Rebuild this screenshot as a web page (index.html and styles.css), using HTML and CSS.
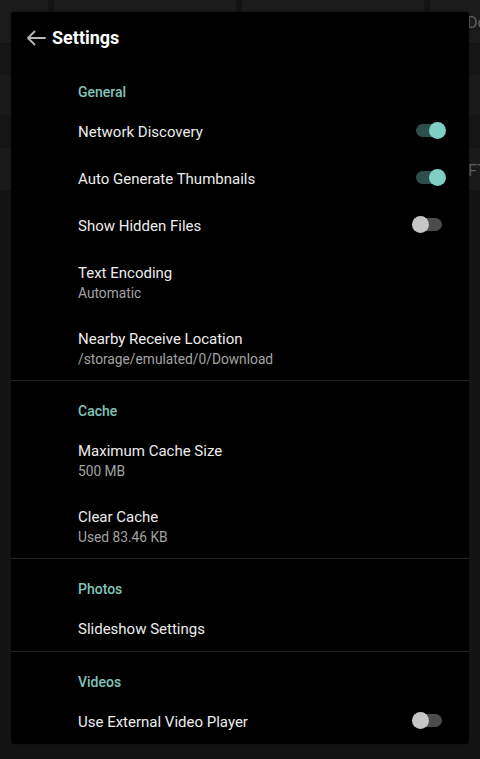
FILE: index.html
```html
<!DOCTYPE html>
<html>
<head>
<meta charset="utf-8">
<link rel="stylesheet" href="styles.css">
</head>
<body>
<div class="backdrop">
  <div class="topbar">
    <div class="tcard c1"></div>
    <div class="tcard c2"></div>
    <div class="tcard c3"></div>
    <div class="tcard c4"><span class="bgtext">Do</span></div>
  </div>
  <div class="bgrow r1"></div>
  <div class="bgrow r2"></div>
  <div class="bgrow r3"></div>
  <div class="bgrow r4"><span class="bgtext">FT</span></div>
</div>

<div class="panel">
  <div class="header">
    <svg class="back" width="20" height="16" viewBox="0 0 20 16">
      <path d="M19 8H2M8.5 1.5L2 8l6.5 6.5" fill="none" stroke="#b8b8b8" stroke-width="1.8" stroke-linecap="round" stroke-linejoin="round"/>
    </svg>
    <span class="title">Settings</span>
  </div>

  <div class="cat">General</div>
  <div class="row single">
    <div class="text"><div class="t">Network Discovery</div></div>
    <div class="switch on"><div class="thumb"></div></div>
  </div>
  <div class="row single">
    <div class="text"><div class="t">Auto Generate Thumbnails</div></div>
    <div class="switch on"><div class="thumb"></div></div>
  </div>
  <div class="row single">
    <div class="text"><div class="t">Show Hidden Files</div></div>
    <div class="switch"><div class="thumb"></div></div>
  </div>
  <div class="row double">
    <div class="text"><div class="t">Text Encoding</div><div class="s">Automatic</div></div>
  </div>
  <div class="row double">
    <div class="text"><div class="t">Nearby Receive Location</div><div class="s">/storage/emulated/0/Download</div></div>
  </div>
  <div class="divider"></div>

  <div class="cat">Cache</div>
  <div class="row double">
    <div class="text"><div class="t">Maximum Cache Size</div><div class="s">500 MB</div></div>
  </div>
  <div class="row double">
    <div class="text"><div class="t">Clear Cache</div><div class="s">Used 83.46 KB</div></div>
  </div>
  <div class="divider"></div>

  <div class="cat">Photos</div>
  <div class="row single">
    <div class="text"><div class="t">Slideshow Settings</div></div>
  </div>
  <div class="divider"></div>

  <div class="cat">Videos</div>
  <div class="row single">
    <div class="text"><div class="t">Use External Video Player</div></div>
    <div class="switch"><div class="thumb"></div></div>
  </div>
</div>
</body>
</html>
```

FILE: styles.css
```css
html, body {
  margin: 0;
  padding: 0;
}
body {
  width: 480px;
  height: 759px;
  overflow: hidden;
  background: #131313;
  font-family: Roboto, "Noto Sans", sans-serif;
  position: relative;
}

.backdrop {
  display: flex;
  flex-direction: column;
}
.topbar {
  display: flex;
  gap: 6px;
  height: 43px;
  margin-bottom: 2px;
}
.tcard {
  background: #1b1b1b;
  height: 100%;
  overflow: hidden;
}
.c1 { width: 48px; }
.c2 { width: 182px; }
.c3 { width: 182px; }
.c4 { flex: 1; padding-left: 37px; }
.bgrow {
  overflow: hidden;
}
.r1 { height: 30px; background: #161616; }
.r2 { height: 40px; background: #1a1a1a; }
.r3 { height: 33px; background: #151515; }
.r4 { height: 42px; background: #1a1a1a; padding-left: 468px; box-sizing: border-box; }
.bgtext {
  color: #5e5e5e;
  font-size: 16px;
  line-height: 46px;
  white-space: nowrap;
}
.c4 .bgtext { line-height: 46px; }

.panel {
  position: absolute;
  left: 11px;
  top: 12px;
  width: 458px;
  height: 732px;
  background: #000;
  border-radius: 3px;
  display: flex;
  flex-direction: column;
  overflow: hidden;
  box-shadow: 0 0 2px rgba(0,0,0,0.5);
}

.header {
  height: 50px;
  flex: none;
  box-sizing: border-box;
  padding-top: 2px;
  display: flex;
  align-items: center;
  padding-left: 15px;
  gap: 6px;
}
.back {
  display: block;
}
.title {
  color: #fff;
  font-weight: 700;
  font-size: 18px;
  line-height: 24px;
}

.cat {
  flex: none;
  height: 45px;
  box-sizing: border-box;
  padding: 21px 0 6px 67px;
  font-size: 14px;
  line-height: 18px;
  font-weight: 500;
  color: #80c4ba;
}

.row {
  flex: none;
  display: flex;
  align-items: center;
  padding-left: 67px;
  padding-right: 27px;
  padding-top: 2px;
  box-sizing: border-box;
}
.row.single { height: 47px; }
.row.double { height: 66px; padding-top: 3px; }
.text { flex: 1; }
.t {
  color: #ececec;
  font-size: 15px;
  line-height: 20px;
}
.s {
  color: #a3a3a3;
  font-size: 13.75px;
  line-height: 20px;
}

.divider {
  flex: none;
  height: 1px;
  background: #1f1f1f;
}

.switch {
  position: relative;
  width: 26px;
  height: 13px;
  border-radius: 7px;
  background: #4b4b4b;
  flex: none;
  margin-top: -2px;
}
.switch .thumb {
  position: absolute;
  top: -2px;
  left: -4px;
  width: 17px;
  height: 17px;
  border-radius: 50%;
  background: #c6c6c6;
}
.switch.on { background: #2d4f4b; }
.switch.on .thumb {
  left: 13px;
  background: #7fcfc4;
}
```
